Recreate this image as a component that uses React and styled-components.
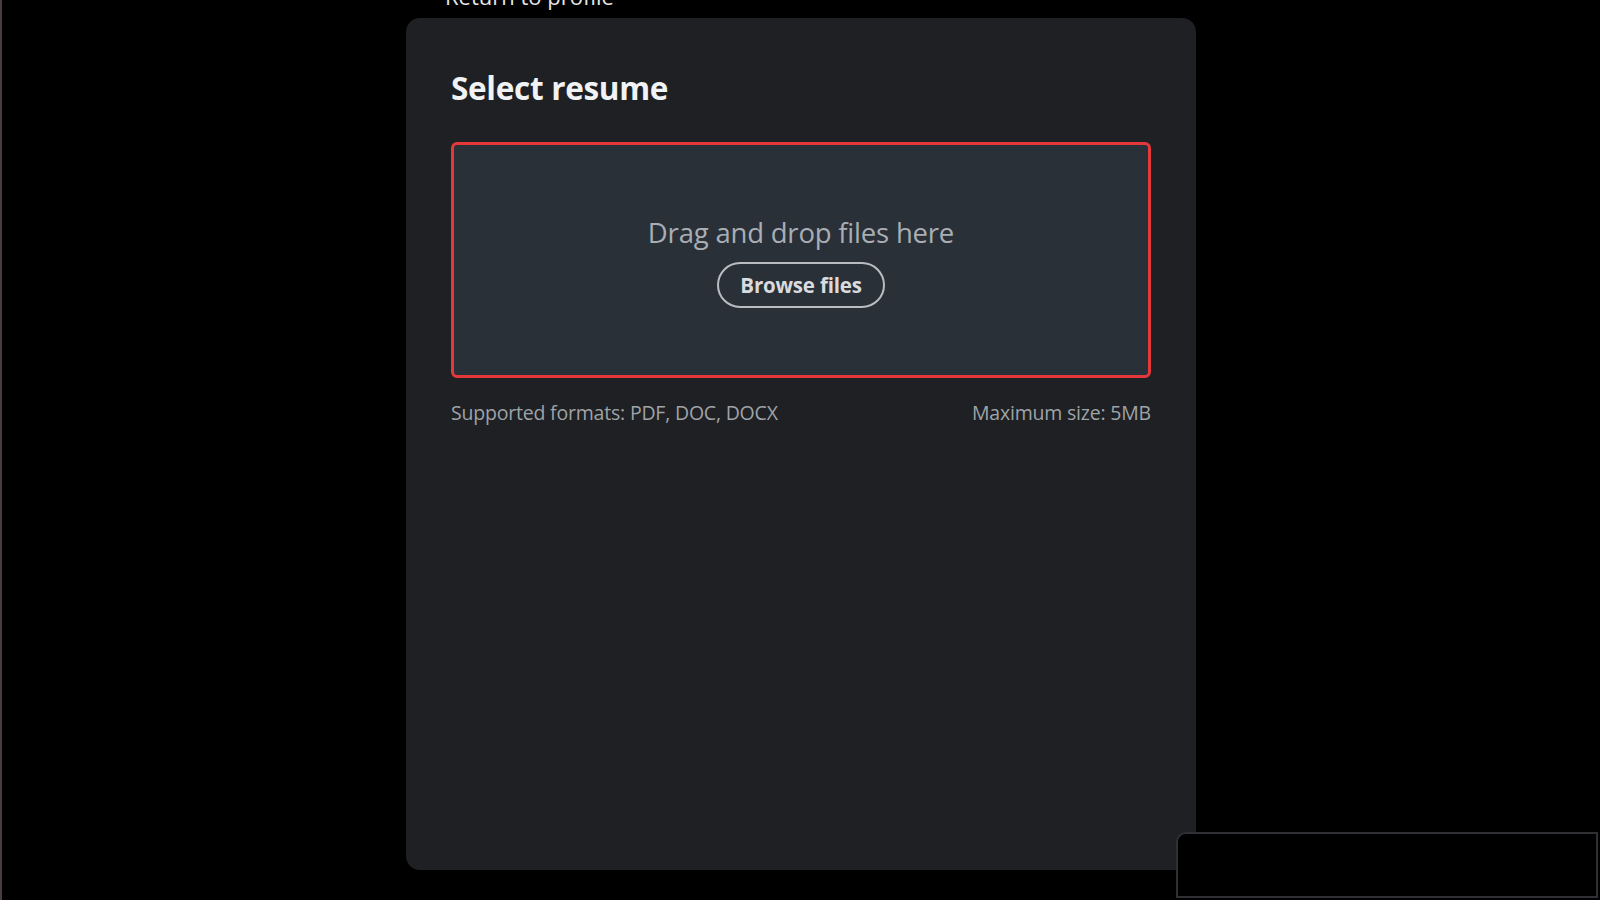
import React from 'react';
import styled, { createGlobalStyle } from 'styled-components';

const GlobalStyle = createGlobalStyle`
  html, body {
    margin: 0;
    padding: 0;
    background: #000;
    height: 100%;
    overflow: hidden;
  }
  body {
    font-family: "Open Sans", "Noto Sans", "Liberation Sans", sans-serif;
    color: #e8e9ea;
  }
  #root {
    height: 100%;
  }
`;

const Page = styled.div`
  position: relative;
  height: 100vh;
  display: flex;
  flex-direction: column;
  align-items: center;
  border-left: 2px solid #4a3a42;
  box-sizing: border-box;
`;

const BackLink = styled.a`
  align-self: flex-start;
  margin: -14px 0 0 443px;
  height: 20px;
  font-size: 22px;
  line-height: 20px;
  color: #e6e6e6;
  text-decoration: none;
`;

const Card = styled.section`
  width: 790px;
  height: 852px;
  margin-top: 12px;
  box-sizing: border-box;
  padding: 50px 45px;
  background: #1e2023;
  border-radius: 14px;
  display: flex;
  flex-direction: column;
`;

const Title = styled.h1`
  margin: 0 0 34px;
  font-size: 31.5px;
  line-height: 40px;
  font-weight: 700;
  color: #f1f2f3;
  letter-spacing: -0.3px;
`;

const DropZone = styled.div`
  height: 236px;
  box-sizing: border-box;
  border: 3px solid #e5383b;
  border-radius: 6px;
  background: #2a3038;
  display: flex;
  flex-direction: column;
  align-items: center;
  justify-content: center;
  gap: 12px;
  padding-top: 4px;
`;

const DropText = styled.p`
  margin: 0;
  font-size: 27.5px;
  line-height: 34px;
  color: #a9aeb4;
  letter-spacing: -0.2px;
`;

const BrowseButton = styled.button`
  height: 46px;
  padding: 0 21px;
  border: 2px solid #b9bdc2;
  border-radius: 999px;
  background: transparent;
  font-family: inherit;
  font-size: 20.5px;
  font-weight: 700;
  color: #d9dbde;
  letter-spacing: -0.2px;
  cursor: pointer;
`;

const Meta = styled.div`
  display: flex;
  justify-content: space-between;
  margin-top: 22px;
  font-size: 19.5px;
  line-height: 26px;
  color: #9ea3a8;
  letter-spacing: -0.2px;
`;

const Toast = styled.div`
  position: absolute;
  left: 1174px;
  right: 2px;
  top: 832px;
  bottom: 2px;
  background: #000;
  border: 2px solid #2e3033;
  border-radius: 10px 0 0 0;
`;

export default function App() {
  return (
    <>
      <GlobalStyle />
      <Page>
        <BackLink href="#">Return to profile</BackLink>
        <Card>
          <Title>Select resume</Title>
          <DropZone>
            <DropText>Drag and drop files here</DropText>
            <BrowseButton type="button">Browse files</BrowseButton>
          </DropZone>
          <Meta>
            <span>Supported formats: PDF, DOC, DOCX</span>
            <span>Maximum size: 5MB</span>
          </Meta>
        </Card>
        <Toast />
      </Page>
    </>
  );
}
